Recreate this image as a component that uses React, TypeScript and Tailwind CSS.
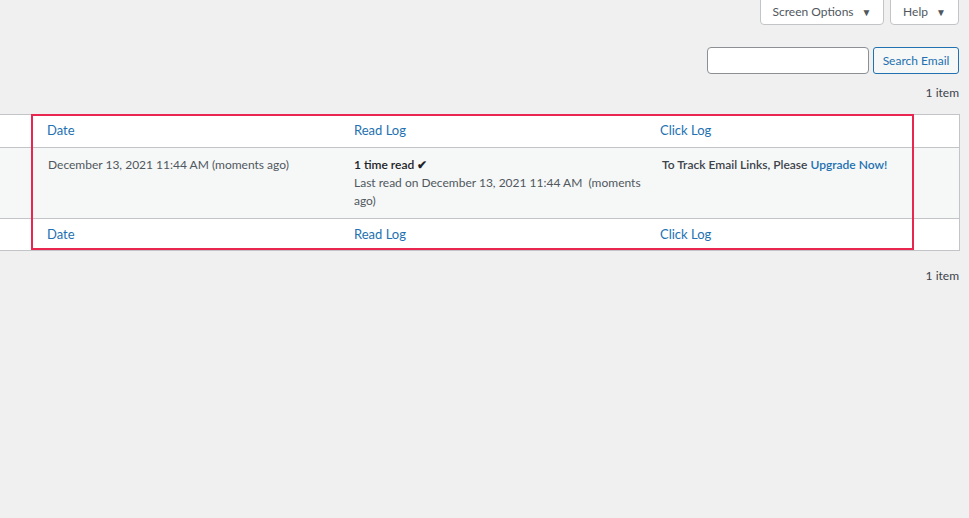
import React from "react";

const FONT = { fontFamily: '"Segoe UI", Lato, "Liberation Sans", sans-serif' };

function Caret() {
  return <span className="ml-[8px] text-[10px] leading-none text-[#50575e]">▼</span>;
}

export default function App() {
  return (
    <div className="min-h-[518px] bg-[#f0f0f1] text-[12px] text-[#3c434a] relative" style={FONT}>
      {/* screen meta tabs */}
      <div className="flex justify-end gap-[6px] pr-[10px]">
        <button className="h-[26px] w-[124px] -mt-px flex items-center justify-center bg-white border border-[#c3c4c7] rounded-b-[4px] text-[#50575e]">
          Screen Options<Caret />
        </button>
        <button className="h-[26px] w-[69px] -mt-px flex items-center justify-center bg-white border border-[#c3c4c7] rounded-b-[4px] text-[#50575e]">
          Help<Caret />
        </button>
      </div>

      {/* search */}
      <div className="flex justify-end gap-[4px] pr-[10px] mt-[22px]">
        <input className="h-[27px] w-[162px] bg-white border border-[#8c8f94] rounded-[4px]" />
        <button className="h-[27px] w-[86px] bg-[#f6f7f7] border border-[#2271b1] rounded-[3px] text-[#2271b1]">
          Search Email
        </button>
      </div>

      <div className="flex justify-end pr-[10px] mt-[9px] h-[19px] leading-[19px] text-[#3c434a]">1 item</div>

      {/* table */}
      <div className="relative mt-[12px] w-[960px] bg-white border-y border-r border-[#c3c4c7]">
        <div className="flex h-[33px] items-center border-b border-[#c3c4c7] text-[#2271b1] text-[13px]">
          <div className="w-[47px]" />
          <div className="w-[307px]">Date</div>
          <div className="w-[306px]">Read Log</div>
          <div className="flex-1">Click Log</div>
        </div>
        <div className="flex h-[70px] bg-[#f6f7f7] pt-[8px] leading-[18px]">
          <div className="w-[48px]" />
          <div className="w-[306px] text-[#50575e]">December 13, 2021 11:44 AM (moments ago)</div>
          <div className="w-[308px] pr-[14px] text-[#50575e]">
            <div className="font-semibold text-[#1d2327]">1 time read ✔</div>
            <div>
              Last read on December 13, 2021 11:44 AM&nbsp; (moments
              <br />
              ago)
            </div>
          </div>
          <div className="flex-1 font-semibold text-[#3c434a]">
            To Track Email Links, Please <a className="text-[#2271b1]">Upgrade Now!</a>
          </div>
        </div>
        <div className="flex h-[32px] items-center border-t border-[#c3c4c7] text-[#2271b1] text-[13px]">
          <div className="w-[47px]" />
          <div className="w-[307px]">Date</div>
          <div className="w-[306px]">Read Log</div>
          <div className="flex-1">Click Log</div>
        </div>
        {/* highlight annotation */}
        <div className="absolute left-[31px] top-[-1px] w-[883px] h-[136px] border-2 border-[#e8264f] pointer-events-none" />
      </div>

      <div className="flex justify-end pr-[10px] mt-[15px] h-[19px] leading-[19px] text-[#3c434a]">1 item</div>
    </div>
  );
}
